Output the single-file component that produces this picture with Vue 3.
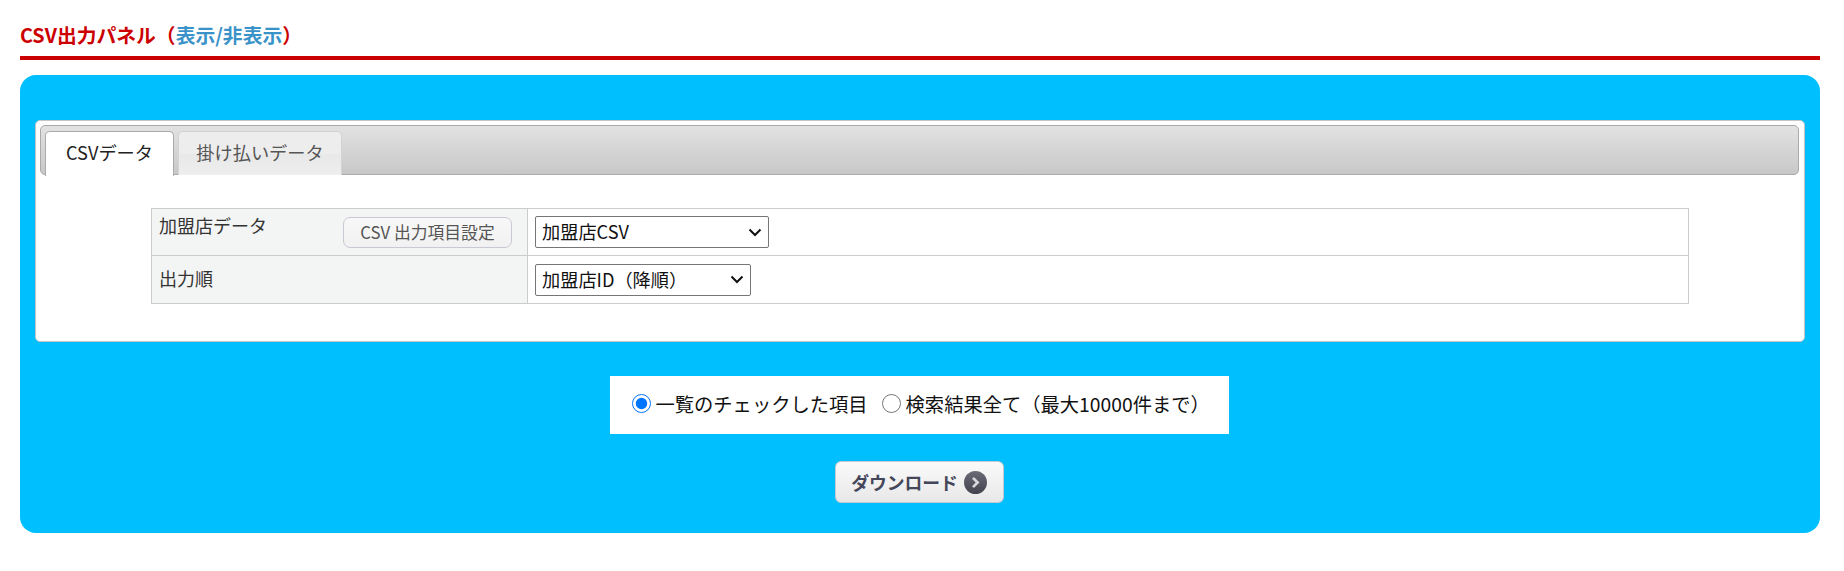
<script setup>
import { ref } from 'vue'
const scope = ref('checked')
const dataType = ref('shop')
const order = ref('id')
</script>

<template>
  <div class="page">
    <h2 class="heading">CSV出力パネル（<a class="toggle" href="#" @click.prevent>表示/非表示</a>）</h2>
    <section class="panel">
      <div class="widget">
        <ul class="tabs">
          <li class="tab active">CSVデータ</li>
          <li class="tab">掛け払いデータ</li>
        </ul>
        <div class="tab-body">
          <table class="form">
            <tbody>
              <tr>
                <th>
                  <div class="th-row">
                    <span class="th-label">加盟店データ</span>
                    <button class="setting" type="button">CSV 出力項目設定</button>
                  </div>
                </th>
                <td>
                  <select v-model="dataType" class="sel sel-a">
                    <option value="shop">加盟店CSV</option>
                  </select>
                </td>
              </tr>
              <tr>
                <th class="th-mid">出力順</th>
                <td>
                  <select v-model="order" class="sel sel-b">
                    <option value="id">加盟店ID（降順）</option>
                  </select>
                </td>
              </tr>
            </tbody>
          </table>
        </div>
      </div>
      <div class="scope">
        <label class="opt"><input v-model="scope" type="radio" value="checked" />一覧のチェックした項目</label>
        <label class="opt"><input v-model="scope" type="radio" value="all" />検索結果全て（最大10000件まで）</label>
      </div>
      <div class="actions">
        <button class="download" type="button">
          ダウンロード
          <svg class="arrow" width="23" height="23" viewBox="0 0 22 22" aria-hidden="true">
            <defs>
              <linearGradient id="dl" x1="0" y1="0" x2="0" y2="1">
                <stop offset="0" stop-color="#6b6b78" />
                <stop offset="1" stop-color="#43434f" />
              </linearGradient>
            </defs>
            <circle cx="11" cy="11" r="11" fill="url(#dl)" />
            <path d="M8.6 6.6 13 11l-4.4 4.4" fill="none" stroke="#d8d8dc" stroke-width="2.6" />
          </svg>
        </button>
      </div>
    </section>
  </div>
</template>

<style>
html, body { background: #fff; }
</style>

<style scoped>
.page {
  width: 1800px;
  margin-left: 20px;
  font-family: "Noto Sans CJK JP", "Noto Sans", sans-serif;
  color: #333;
}
.heading {
  margin: 0;
  height: 56px;
  border-bottom: 4px solid #cc0000;
  font-size: 19.8px;
  font-weight: 700;
  line-height: 69px;
  color: #cc0000;
  overflow: hidden;
}
.toggle { color: #3a93c8; text-decoration: none; }
.panel {
  margin-top: 15px;
  height: 458px;
  box-sizing: border-box;
  padding: 45px 15px 0;
  background: #00bfff;
  border-radius: 16px;
}
.widget {
  height: 222px;
  box-sizing: border-box;
  padding: 4px 5px 4px 4px;
  background: #fff;
  border: 1px solid #c5c5c5;
  border-radius: 5px;
}
.tabs {
  display: flex;
  gap: 4px;
  margin: 0;
  padding: 5px 0 0 4px;
  height: 50px;
  box-sizing: border-box;
  list-style: none;
  border: 1px solid #aaa;
  border-radius: 5px;
  background: linear-gradient(#e2e2e2, #c8c8c8);
}
.tab {
  width: 164px;
  height: 44px;
  box-sizing: border-box;
  font-size: 18.2px;
  line-height: 40px;
  text-align: center;
  color: #555;
  background: linear-gradient(#ededed 50%, #e8e8e8 50%, #eeeeee);
  border: 1px solid #d3d3d3;
  border-bottom: 0;
  border-radius: 5px 5px 0 0;
}
.tab.active {
  width: 129px;
  height: 45px;
  color: #222;
  background: #fff;
  border-color: #aaa;
  position: relative;
  z-index: 1;
}
.tab-body { padding: 33px 0 0 111px; }
.form {
  width: 1538px;
  border-collapse: collapse;
  table-layout: fixed;
}
.form th, .form td {
  height: 47px;
  box-sizing: border-box;
  border: 1px solid #cccccc;
  padding: 0 7px;
  vertical-align: middle;
}
.form tr:last-child th, .form tr:last-child td { height: 48px; }
.form th {
  width: 376px;
  background: #f3f4f4;
  font-weight: 400;
  text-align: left;
  font-size: 18px;
  color: #333;
  vertical-align: top;
}
.form th.th-mid { vertical-align: middle; line-height: 1.2; padding-bottom: 2px; }
.th-row {
  display: flex;
  justify-content: space-between;
  padding-right: 8px;
}
.th-label { display: block; line-height: 32px; }
.setting {
  margin-top: 8px;
  width: 169px;
  height: 31px;
  padding: 0;
  font: 400 16.8px/1 "Noto Sans CJK JP", sans-serif;
  color: #555;
  background: linear-gradient(#f8f8f8, #f1f1f1);
  border: 1px solid #c9c9d6;
  border-radius: 7px;
}
.sel {
  display: block;
  height: 32px;
  box-sizing: border-box;
  appearance: none;
  padding: 0 0 2px 6px;
  font: 400 18.2px "Noto Sans CJK JP", sans-serif;
  color: #111;
  background: #fff url("data:image/svg+xml,%3Csvg xmlns='http://www.w3.org/2000/svg' width='14' height='9' viewBox='0 0 14 9'%3E%3Cpath d='M1.5 1.5 7 7l5.5-5.5' fill='none' stroke='%23111' stroke-width='2'/%3E%3C/svg%3E") no-repeat right 6px center;
  border: 1px solid #767676;
  border-radius: 2px;
}
.sel-a { width: 234px; }
.sel-b { width: 216px; }
.scope {
  display: flex;
  gap: 14px;
  align-items: center;
  width: 619px;
  height: 58px;
  box-sizing: border-box;
  padding-left: 22px;
  margin: 34px auto 0;
  background: #fff;
  font-size: 19.3px;
  line-height: 1.4;
  color: #111;
  position: relative;
  left: -1px;
}
.opt { display: flex; align-items: center; white-space: nowrap; }
.opt input { width: 19px; height: 19px; margin: 0 5px 3px 0; }
.actions { display: flex; justify-content: center; margin-top: 27px; padding-right: 2px; }
.download {
  display: flex;
  align-items: center;
  justify-content: center;
  gap: 6px;
  width: 169px;
  height: 42px;
  padding: 0;
  font: 700 17.8px "Noto Sans CJK JP", sans-serif;
  color: #44465a;
  background: linear-gradient(#fafafa, #e8e8e8);
  border: 1px solid #c8c8d0;
  border-radius: 6px;
}
</style>
